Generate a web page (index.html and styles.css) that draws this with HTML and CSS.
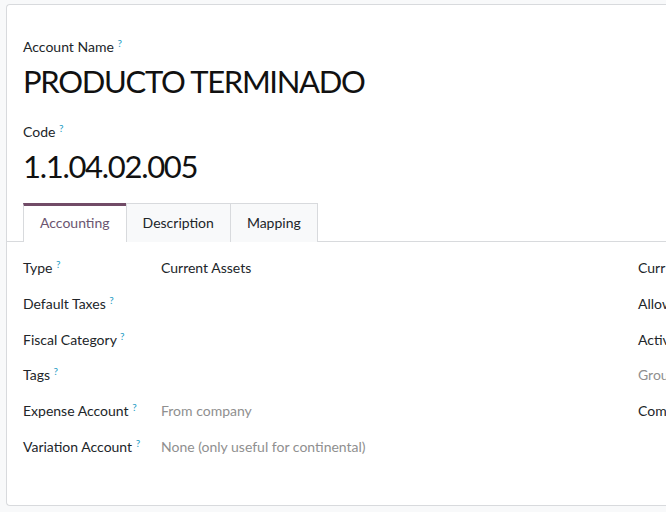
FILE: index.html
```html
<!DOCTYPE html>
<html lang="en">
<head>
    <meta charset="UTF-8">
    <meta name="viewport" content="width=device-width, initial-scale=1.0">
    <title>Account</title>
    <link rel="stylesheet" href="styles.css">
</head>
<body>
    <div class="sheet">
        <div class="title-block">
            <label class="field-label">Account Name <sup class="help">?</sup></label>
            <h1 class="big-value">PRODUCTO TERMINADO</h1>
        </div>
        <div class="title-block code-block">
            <label class="field-label">Code <sup class="help">?</sup></label>
            <h1 class="big-value">1.1.04.02.005</h1>
        </div>

        <!-- Notebook tabs -->
        <div class="tabs">
            <div class="tab active">Accounting</div>
            <div class="tab">Description</div>
            <div class="tab">Mapping</div>
        </div>

        <div class="tab-content">
            <div class="group">
                <div class="row">
                    <div class="label">Type <sup class="help">?</sup></div>
                    <div class="value">Current Assets</div>
                </div>
                <div class="row">
                    <div class="label">Default Taxes <sup class="help">?</sup></div>
                    <div class="value"></div>
                </div>
                <div class="row">
                    <div class="label">Fiscal Category <sup class="help">?</sup></div>
                    <div class="value"></div>
                </div>
                <div class="row">
                    <div class="label">Tags <sup class="help">?</sup></div>
                    <div class="value"></div>
                </div>
                <div class="row">
                    <div class="label">Expense Account <sup class="help">?</sup></div>
                    <div class="value muted">From company</div>
                </div>
                <div class="row">
                    <div class="label">Variation Account <sup class="help">?</sup></div>
                    <div class="value muted">None (only useful for continental)</div>
                </div>
            </div>
            <div class="group side">
                <div class="row"><div class="label">Curr</div></div>
                <div class="row"><div class="label">Allow</div></div>
                <div class="row"><div class="label">Activ</div></div>
                <div class="row"><div class="label muted">Grou</div></div>
                <div class="row"><div class="label">Com</div></div>
            </div>
        </div>
    </div>
</body>
</html>
```

FILE: styles.css
```css
* {
    margin: 0;
    padding: 0;
    box-sizing: border-box;
}

html, body {
    height: 100%;
    overflow: hidden;
}

body {
    background: #f8f9fa;
    font-family: 'Lato', 'Noto Sans', sans-serif;
    font-size: 14px;
    color: #212529;
    padding: 4px 0 6px 6px;
}

.sheet {
    width: 660px;
    height: 502px;
    background: white;
    border: 1px solid #d8dadd;
    border-right: none;
    border-radius: 4px 0 0 4px;
    padding: 32px 0 0 16px;
    overflow: hidden;
}

.field-label {
    display: block;
    font-size: 14px;
    line-height: 20px;
}

.help {
    color: #1e9cc4;
    font-size: 10px;
    vertical-align: top;
    position: relative;
    top: -4px;
}

.big-value {
    font-weight: 400;
    font-size: 31px;
    letter-spacing: -1.3px;
    line-height: 44px;
    margin-top: 2px;
    color: #111;
}

.code-block {
    margin-top: 19px;
}

.tabs {
    display: flex;
    margin: 15px 0 0 -16px;
    padding-left: 16px;
    border-bottom: 1px solid #d8dadd;
}

.tab {
    padding: 9px 16px 8px;
    border: 1px solid #d8dadd;
    border-bottom: none;
    margin-bottom: -1px;
    background: #f8f9fa;
    line-height: 20px;
    margin-right: -1px;
}

.tab.active {
    background: white;
    border-top: 3px solid #714b67;
    padding-top: 7px;
    color: #6b5570;
    height: 39px;
}

.tab-content {
    display: flex;
    padding-top: 14px;
}

.group {
    width: 615px;
    flex-shrink: 0;
}

.side {
    width: auto;
}

.row {
    display: flex;
    height: 35.8px;
    line-height: 24px;
}

.label {
    width: 138px;
    flex-shrink: 0;
    white-space: nowrap;
}

.value {
    white-space: nowrap;
}

.muted {
    color: #8f8f8f;
}

.side .label {
    width: auto;
}
```
